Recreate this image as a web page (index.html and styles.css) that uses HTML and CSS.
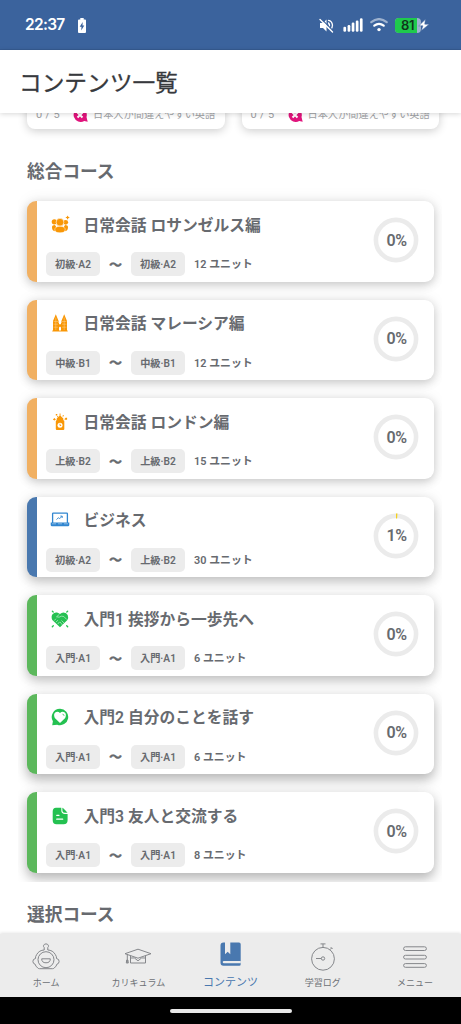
FILE: index.html
```html
<!DOCTYPE html>
<html lang="ja">
<head>
<meta charset="utf-8">
<title>コンテンツ一覧</title>
<link rel="stylesheet" href="styles.css">
</head>
<body>
<div class="app">
  <div class="status">
    <span class="clock">22:37</span>
    <svg class="saver" width="8" height="15" viewBox="0 0 8 15"><path fill="#fff" d="M2.3 0h3.4v1.5H7q1 0 1 1V14q0 1-1 1H1q-1 0-1-1V2.500q0-1 1-1h1.300z"/><path fill="#3b639d" d="M4.700 4 1.700 8.800h1.800L3.200 12.500 6.300 7.600H4.500z"/></svg>
    <svg class="mute" width="15" height="15" viewBox="0 0 15 15" fill="none" stroke="#fff" stroke-width="1.300" stroke-linecap="round"><path fill="#fff" stroke="none" d="M1 5h3l3.500-3.500v12L4 10H1z"/><path d="M9.500 5q2 2.300 0 5M9.500 2.300q3.500.5 4 5M13.400 7.500q0 2-1.400 3.500"/><path stroke="#3b639d" stroke-width="1.200" d="m2 .6 12.300 12.300"/><path stroke-width="1.400" d="m1 1.400 12.500 12.500"/></svg>
    <svg class="signal" width="20" height="14" viewBox="0 0 20 14" fill="#fff"><rect x=".4" y="8.800" width="2.700" height="5" rx="1.200"/><rect x="4.600" y="7" width="2.700" height="6.800" rx="1.200"/><rect x="8.700" y="4.600" width="2.700" height="9.200" rx="1.200"/><rect x="12.800" y="2.600" width="2.700" height="11.200" rx="1.200"/><rect x="16.900" y=".3" width="2.700" height="13.500" rx="1.200"/></svg>
    <svg class="wifi" width="18" height="14" viewBox="0 0 18 14" fill="none" stroke="#fff" stroke-width="2.200" stroke-linecap="round"><path opacity=".5" d="M1.300 4.200q7.700-6.200 15.400 0"/><path d="M4.300 7.700q4.700-3.800 9.400 0"/><circle cx="9" cy="11.600" r="1.700" fill="#fff" stroke="none"/></svg>
    <span class="battery"><span class="level">81</span></span>
    <svg class="bolt" width="12" height="12" viewBox="0 0 11 11"><path fill="#fff" stroke="#3b639d" stroke-width=".5" d="M6.800.3.700 6.300h3.800L3 10.700l7.300-6H6.200z"/></svg>
  </div>

  <header class="header">コンテンツ一覧</header>

  <main class="content">
    <div class="tips">
      <div class="tip"><span class="count">0 / 5</span><svg width="15" height="14" viewBox="0 0 15 14"><path fill="#e0147c" d="M7 0a7 7 0 0 1 6.500 9l1.200 4.800-3.500-.8A7 7 0 1 1 7 0z"/><path d="m4.500 4.500 5 5m0-5-5 5" stroke="#fff" stroke-width="2"/></svg><span>日本人が間違えやすい英語</span></div>
      <div class="tip"><span class="count">0 / 5</span><svg width="15" height="14" viewBox="0 0 15 14"><path fill="#e0147c" d="M7 0a7 7 0 0 1 6.500 9l1.200 4.800-3.500-.8A7 7 0 1 1 7 0z"/><path d="m4.500 4.500 5 5m0-5-5 5" stroke="#fff" stroke-width="2"/></svg><span>日本人が間違えやすい英語</span></div>
    </div>

    <h2 class="section">総合コース</h2>
    <div class="courses">
      <article class="card orange">
        <div class="info">
          <div class="title"><svg class="icon" viewBox="0 0 20 20" fill="#f99706"><path d="M17.600 .4l.7 1.400 1.500.7-1.500.7-.7 1.500-.7-1.500-1.500-.7 1.500-.7z"/><circle cx="4.300" cy="6.800" r="2.600"/><circle cx="15.700" cy="7.300" r="2.400"/><circle cx="10" cy="7.200" r="3.900" stroke="#fff" stroke-width=".6"/><path d="M2 12q0-2 3-2l1.500 2.500-1.700 3.700Q2 16 2 12zM18 12q0-2-3-2l-1.500 2.500 1.700 3.700Q18 16 18 12z"/><path stroke="#fff" stroke-width=".5" d="M4.800 14.800q0-3.500 5.200-3.500t5.200 3.500q0 3-5.200 3t-5.200-3z"/></svg><h3>日常会話 ロサンゼルス編</h3></div>
          <div class="meta"><span class="pill">初級·A2</span><span class="tilde">〜</span><span class="pill">初級·A2</span><span class="units">12 ユニット</span></div>
        </div>
        <div class="ring"><svg viewBox="0 0 46 46"><circle cx="23" cy="23" r="20.100"/></svg><span>0%</span></div>
      </article>
      <article class="card orange">
        <div class="info">
          <div class="title"><svg class="icon" viewBox="0 0 20 20" fill="#f99706"><path d="M3 17.500V8L5.800 1.200 8.600 8v2h2.800V8l2.800-6.800L17 8v9.500h.7v1H2.300v-1z"/><path d="M9 17.600v-3l1-1 1 1v3zM9 10h2v1.300H9z" fill="#fff"/><path d="M3.500 8.500h4.500m4 0h4.500M3.500 11.200h4.500m4 0h4.500M3.500 14.200h4.500m4 0h4.500M5.800 4.500V17m8.400-12.500V17" stroke="#fff" stroke-width=".4" opacity=".7"/></svg><h3>日常会話 マレーシア編</h3></div>
          <div class="meta"><span class="pill">中級·B1</span><span class="tilde">〜</span><span class="pill">中級·B1</span><span class="units">12 ユニット</span></div>
        </div>
        <div class="ring"><svg viewBox="0 0 46 46"><circle cx="23" cy="23" r="20.100"/></svg><span>0%</span></div>
      </article>
      <article class="card orange">
        <div class="info">
          <div class="title"><svg class="icon" viewBox="0 0 20 20" fill="#f99706"><path d="M9.600 1.500h.9v2.200L13.300 6.500v1.800H6.700V6.500l2.900-2.800zM5.800 9.300q0-1 1-1h6.500q1 0 1 1V17q0 1-1 1H6.800q-1 0-1-1z"/><path d="m2.900 7.400 1.500-1.500 1.500 1.500-1.500 1zM14.300 7.200l1.300-1.500h1.500v2h-1.900zM5.800 2h1.500v1.500H5.800zM7 4.300h1.200v1H7zM12.300 4l1-1 .7.800-1 1z"/><circle cx="10" cy="13.200" r="2.500" fill="#fff"/><path d="M10 11.700V13.500h1.200" fill="none" stroke="#f99706" stroke-width=".9"/></svg><h3>日常会話 ロンドン編</h3></div>
          <div class="meta"><span class="pill">上級·B2</span><span class="tilde">〜</span><span class="pill">上級·B2</span><span class="units">15 ユニット</span></div>
        </div>
        <div class="ring"><svg viewBox="0 0 46 46"><circle cx="23" cy="23" r="20.100"/></svg><span>0%</span></div>
      </article>
      <article class="card blue">
        <div class="info">
          <div class="title"><svg class="icon" viewBox="0 0 20 20" fill="none" stroke="#3186d0"><path stroke-width="1.300" d="M2.600 13V3.800q0-.7.700-.7h13.400q.7 0 .7.700V13"/><path stroke-width=".9" d="m6.500 9.600 2-2 1 1.200 2.700-2.700m-1.900 0h1.900v1.900"/><path fill="#3186d0" stroke="none" d="M.7 12.400h18.600v2.700q0 1.100-1 1.100H1.700q-1 0-1-1.100z"/><path stroke="#fff" stroke-width=".6" opacity=".7" d="M8 13.800h4M2 13.800h4m8 0h4"/></svg><h3>ビジネス</h3></div>
          <div class="meta"><span class="pill">初級·A2</span><span class="tilde">〜</span><span class="pill">上級·B2</span><span class="units">30 ユニット</span></div>
        </div>
        <div class="ring"><svg viewBox="0 0 46 46"><circle cx="23" cy="23" r="20.100"/><path class="done" d="M23 2.900a20.100 20.100 0 0 1 1.260.04"/></svg><span>1%</span></div>
      </article>
      <article class="card green">
        <div class="info">
          <div class="title"><svg class="icon" viewBox="0 0 20 20"><path fill="#24c151" d="M10 18.300 2.300 11Q.8 7.500 2.500 5.200 4.500 3 7 3.500q2 .5 3 1.500 1.500-1.500 3.500-1.500 3 0 4.200 2.500 1 2.500-.3 5z"/><path d="M6.500 7.800 9.300 5.400M6.500 7.800l2.600.4 2.200-1 2.500.3 3 3M4.300 11.500l1.700-1.800M6 13.200l1.800-2M7.800 15l1.800-2.200M11.500 11.500l2.800 2.800M10 13l2.500 3" fill="none" stroke="#fff" stroke-width=".5"/><path d="m2.300 2.100.9.900m14.500-.9-.9.900M2.300 17.700l1-1m14.400 1-1-1" stroke="#24c151" stroke-width="1.300" stroke-linecap="round"/></svg><h3>入門1 挨拶から一歩先へ</h3></div>
          <div class="meta"><span class="pill">入門·A1</span><span class="tilde">〜</span><span class="pill">入門·A1</span><span class="units">6 ユニット</span></div>
        </div>
        <div class="ring"><svg viewBox="0 0 46 46"><circle cx="23" cy="23" r="20.100"/></svg><span>0%</span></div>
      </article>
      <article class="card green">
        <div class="info">
          <div class="title"><svg class="icon" viewBox="0 0 20 20"><path fill="#24c151" d="M10 1.800a8.200 8.200 0 1 1-2.800 15.900l-5 .5.7-4A8.200 8.200 0 0 1 10 1.800z"/><path fill="#fff" d="M10 16 4.800 11Q3.200 7.600 5.200 5.600q2.500-1.900 4.800.5 2.300-2.400 4.800-.5 2 2 .4 5.400z"/><path d="M12.500 7.200q1.500.1 1.600 1.600" fill="none" stroke="#24c151" stroke-width=".8"/></svg><h3>入門2 自分のことを話す</h3></div>
          <div class="meta"><span class="pill">入門·A1</span><span class="tilde">〜</span><span class="pill">入門·A1</span><span class="units">6 ユニット</span></div>
        </div>
        <div class="ring"><svg viewBox="0 0 46 46"><circle cx="23" cy="23" r="20.100"/></svg><span>0%</span></div>
      </article>
      <article class="card green">
        <div class="info">
          <div class="title"><svg class="icon" viewBox="0 0 20 20"><path fill="#24c151" d="M6 1.700h5.300v2.500q0 3.800 3.700 3.800h2.600v6.300q0 4-4 4H6.500q-3.800 0-3.800-4V5.500q0-3.800 3.300-3.800z"/><path fill="#24c151" d="M12.400 1.800q.6.100 5.100 5h-2.600q-2.500 0-2.500-2.500z"/><path stroke="#fff" stroke-width="1.200" stroke-linecap="round" d="M6.700 9.300H9m-2.300 3.900h6"/></svg><h3>入門3 友人と交流する</h3></div>
          <div class="meta"><span class="pill">入門·A1</span><span class="tilde">〜</span><span class="pill">入門·A1</span><span class="units">8 ユニット</span></div>
        </div>
        <div class="ring"><svg viewBox="0 0 46 46"><circle cx="23" cy="23" r="20.100"/></svg><span>0%</span></div>
      </article>
    </div>
    <h2 class="section next">選択コース</h2>
  </main>

  <nav class="nav">
    <a class="tab"><svg viewBox="0 0 30 30"><path d="M13.200 7V4.500q-1.200-1-.5-2.300Q13.300.9 15 .9t2.300 1.300q.6 1.400-.5 2.300V7q5 .2 7.500 4.500 1.500 2.200 1.200 4 2.800.5 2.600 3-.2 2.400-2 2.500-.7 2.200-3 4.200-.7.500-1.500.5H8.400q-.8 0-1.500-.5-2.300-2-3-4.200-1.800-.1-2-2.500-.2-2.500 2.600-3-.3-1.800 1.200-4Q8.200 7.200 13.200 7z"/><circle cx="15" cy="16.700" r="8"/><path d="M10.700 15.800h8.600q0 4-4.300 4t-4.300-4z"/></svg><span>ホーム</span></a>
    <a class="tab"><svg viewBox="0 0 30 30"><path d="m15 6.200 13 4.500-13 4.500-13-4.500zM7.500 12.700v7.300h15v-7.300M7.500 15q4-1.500 7.500 2.800 3.500-4.300 7.500-2.800M4.300 11.500v8.500m-1 0h2l-.4-3H3.700z"/></svg><span>カリキュラム</span></a>
    <a class="tab active"><svg viewBox="0 0 24 24"><path d="M4.500.5H6v11.700l2.700-2.500 2.600 2.500V.5H20q1.700 0 1.700 1.700v20.100q0 1.500-1.500 1.500H4.500q-3 0-3-3V3.500q0-3 3-3z"/><path fill="#ececec" d="M5 18.900h16.800v2.400H5q-1.300 0-1.300-1.200T5 18.900z"/></svg><span>コンテンツ</span></a>
    <a class="tab"><svg viewBox="0 0 30 30"><circle cx="15" cy="15.800" r="11.400"/><path d="M12.500.9h5M15 .9v3.500m6.800 2.400 1.900-1.900m-1-.8 1.900 1.900M8 15.500h5.300"/><circle cx="15" cy="15.500" r="1.700"/></svg><span>学習ログ</span></a>
    <a class="tab"><svg viewBox="0 0 30 30"><rect x="3.600" y="3.800" width="22.800" height="3.700" rx="1.850"/><rect x="3.600" y="12.300" width="22.800" height="3.700" rx="1.850"/><rect x="3.600" y="20.600" width="22.800" height="3.700" rx="1.850"/></svg><span>メニュー</span></a>
  </nav>
  <div class="system"><span class="handle"></span></div>
</div>
</body>
</html>
```

FILE: styles.css
```css
* { box-sizing: border-box; }
body { margin: 0; background: #fff; color: #676a6f; font-family: Roboto, "Noto Sans CJK JP", sans-serif; }
h2, h3 { margin: 0; font-weight: 600; }
svg { display: block; flex: none; }
.app { display: flex; flex-direction: column; width: 461px; height: 1024px; overflow: hidden; }

.status { display: flex; align-items: center; flex: none; height: 50px; padding: 1px 31px 0 25px; background: #3b639d; border-bottom: 1px solid #365b92; color: #fff; }
.clock { width: 40px; font: 600 15.500px/20px Inter, sans-serif; letter-spacing: -.7px; white-space: nowrap; }
.saver { margin: 1px 0 0 13px; }
.mute { margin: 1px 0 0 auto; }
.signal { margin-left: 9px; }
.wifi { margin-left: 7px; }
.battery { display: flex; width: 26px; height: 15px; margin-left: 7px; border-radius: 4px; background: #9eb2cf; overflow: hidden; }
.level { width: 22px; padding-left: 6px; background: #1fc94c; color: #10351c; font: 600 13px/15px Inter, sans-serif; letter-spacing: -.3px; }
.bolt { margin-left: -3px; }

.header { position: relative; z-index: 2; flex: none; height: 63px; padding: 1px 0 0 19px; background: #fff; color: #37393d; font-size: 22.700px; font-weight: 400; line-height: 66px; -webkit-text-stroke: .3px #37393d; box-shadow: 0 1px 5px rgba(0, 0, 0, .16); }

.content { flex: none; height: 821px; overflow: hidden; }
.tips { display: flex; gap: 17px; height: 29px; padding: 0 0 0 9px; margin-left: 18px; clip-path: inset(0 0 -11px 0); }
.tip { display: flex; align-items: center; flex: none; width: 197.500px; height: 36px; margin-top: -20px; padding: 7px 0 0 9px; border-radius: 0 0 8px 8px; background: #fff; box-shadow: 0 2px 10px rgba(0, 0, 0, .2); color: #a0a2a5; font-size: 10.200px; line-height: 14px; white-space: nowrap; }
.tip .count { width: 37px; font-size: 11px; letter-spacing: .3px; }
.tip svg { margin-right: 5px; }

.section { padding-left: 27px; font-size: 17.700px; line-height: 26px; margin-top: 17px; }
.courses { display: flex; flex-direction: column; gap: 18px; width: 424px; height: 697px; padding: 16px 8px 0 9px; overflow: hidden; margin-left: 18px; }
.card { display: flex; flex: none; justify-content: space-between; align-items: center; height: 80.500px; padding-right: 15px; border-left: 10px solid; border-radius: 9px; background: #fff; box-shadow: 0 3px 10px rgba(0, 0, 0, .18), 0 0 16px rgba(0, 0, 0, .08); }
.card:nth-child(n+4) { box-shadow: 0 5px 11px rgba(0, 0, 0, .21), 0 0 16px rgba(0, 0, 0, .08); }
.card:nth-child(n+6) { box-shadow: 0 6px 12px rgba(0, 0, 0, .25), 0 0 16px rgba(0, 0, 0, .08); }
.orange { border-color: #f1b062; }
.blue { border-color: #4978af; }
.green { border-color: #5cb85c; }
.info { display: flex; flex-direction: column; gap: 15px; align-self: flex-start; padding: 12px 0 0 9px; }
.title { display: flex; align-items: center; gap: 14px; height: 24px; padding-left: 4px; }
.icon { width: 20px; height: 20px; margin-top: -1px; }
h3 { padding-top: 1px; margin-left: -.500px; font-size: 15.750px; line-height: 24px; white-space: nowrap; }
.meta { display: flex; align-items: center; height: 24px; font-weight: 600; white-space: nowrap; }
.pill { width: 54px; height: 24px; border-radius: 5px; background: #ececec; font-size: 10.200px; line-height: 26px; text-align: center; }
.tilde { padding-top: 1px; width: 31px; text-align: center; font-size: 13px; line-height: 24px; -webkit-text-stroke: .4px #676a6f; }
.units { padding-top: 2px; margin-left: 9px; font-size: 10.900px; line-height: 26px; }
.ring { display: grid; place-items: center; width: 46px; height: 46px; margin-top: -2px; }
.ring > * { grid-area: 1 / 1; }
.ring svg { width: 46px; height: 46px; fill: none; stroke: #ebebeb; stroke-width: 4.600; }
.ring .done { stroke: #f4d01c; stroke-width: 5; }
.ring span { font-size: 16px; font-weight: 600; line-height: 20px; letter-spacing: -.4px; padding: 1px 0 0 1px; }
.next { margin-top: 20px; }

.nav { position: relative; z-index: 2; display: flex; flex: none; height: 63px; background: #ececec; box-shadow: 0 -1px 3px rgba(0, 0, 0, .12); }
.tab { display: flex; flex: 1; flex-direction: column; align-items: center; padding-top: 9px; color: #6d7075; font-size: 9px; line-height: 14px; }
.tab svg { width: 30px; height: 30px; margin-bottom: 3px; fill: none; stroke: #85878b; stroke-width: 1; }
.tab.active { padding-top: 8px; color: #4978af; font-size: 11px; line-height: 16px; }
.tab.active svg { width: 24px; height: 24px; margin-bottom: 9px; fill: #4978af; stroke: none; }
.system { display: flex; justify-content: center; flex: 1; padding-top: 12px; background: #000; }
.handle { width: 122px; height: 4px; border-radius: 2px; background: #e8e8e8; }
```
